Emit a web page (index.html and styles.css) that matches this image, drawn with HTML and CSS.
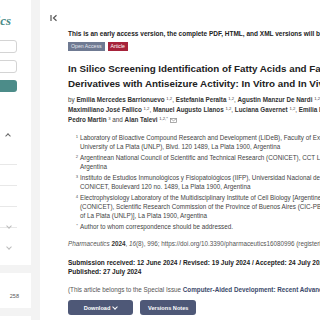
FILE: index.html
```html
<!DOCTYPE html>
<html lang="en">
<head>
    <meta charset="UTF-8">
    <title>Pharmaceutics</title>
    <link rel="stylesheet" href="styles.css">
</head>
<body>
<div class="sidebar">
    <div class="side-card">
        <div class="logo">Pharmaceutics</div>
        <div class="field"></div>
        <div class="field"></div>
        <div class="go"></div>
        <div class="toggle"><span class="chev up"></span></div>
        <div class="menu">
            <div class="menu-row"></div>
            <div class="menu-row"></div>
            <div class="menu-row"><span class="chev down"></span></div>
            <div class="menu-row last"><span class="chev down"></span></div>
        </div>
    </div>
    <div class="side-card small">
        <span class="count">258</span>
    </div>
    <div class="side-card small"></div>
</div>
<div class="main">
    <div class="toolbar">
        <svg width="8" height="8" viewBox="0 0 8 8"><path d="M1 1v6M6.5 1.3L3.5 4l3 2.7" fill="none" stroke="#555" stroke-width="1.2"/></svg>
    </div>
    <div class="content">
        <p class="notice">This is an early access version, the complete PDF, HTML, and XML versions will be available soon.</p>
        <div class="badges">
            <span class="badge oa">Open Access</span>
            <span class="badge art">Article</span>
        </div>
        <h1 class="title">In Silico Screening Identification of Fatty Acids and Fatty Acid<br>Derivatives with Antiseizure Activity: In Vitro and In Vivo Validation</h1>
        <p class="authors">by <b>Emilia Mercedes Barrionuevo</b> <sup>1,2</sup>, <b>Estefania Peralta</b> <sup>1,2</sup>, <b>Agustin Manzur De Nardi</b> <sup>1,2</sup>,<br>
            <b>Maximiliano José Fallico</b> <sup>1,2</sup>, <b>Manuel Augusto Llanos</b> <sup>1,2</sup>, <b>Luciana Gavernet</b> <sup>1,2</sup>, <b>Emilia Lisa</b> <sup>4</sup>,<br>
            <b>Pedro Martin</b> <sup>3</sup> and <b>Alan Talevi</b> <sup>1,2,*</sup> <svg class="mail" width="7" height="5" viewBox="0 0 7 5"><rect x="0.5" y="0.5" width="6" height="4" fill="none" stroke="#888" stroke-width="0.7"/><path d="M0.5 0.5L3.5 2.8 6.5 0.5" fill="none" stroke="#888" stroke-width="0.7"/></svg></p>
        <ul class="affil">
            <li><sup>1</sup><span>Laboratory of Bioactive Compound Research and Development (LIDeB), Faculty of Exact Sciences, National<br>University of La Plata (UNLP), Blvd. 120 1489, La Plata 1900, Argentina</span></li>
            <li><sup>2</sup><span>Argentinean National Council of Scientific and Technical Research (CONICET), CCT La Plata, La Plata 1900,<br>Argentina</span></li>
            <li><sup>3</sup><span>Instituto de Estudios Inmunológicos y Fisiopatológicos (IIFP), Universidad Nacional de La Plata (UNLP),<br>CONICET, Boulevard 120 no. 1489, La Plata 1900, Argentina</span></li>
            <li><sup>4</sup><span>Electrophysiology Laboratory of the Multidisciplinary Institute of Cell Biology [Argentine Research Council<br>(CONICET), Scientific Research Commission of the Province of Buenos Aires (CIC-PBA), National University<br>of La Plata (UNLP)], La Plata 1900, Argentina</span></li>
            <li><sup>*</sup><span>Author to whom correspondence should be addressed.</span></li>
        </ul>
        <p class="cite"><i>Pharmaceutics</i> <b>2024</b>, <i>16</i>(8), 996; https://doi.org/10.3390/pharmaceutics16080996 (registering DOI)</p>
        <p class="dates"><b>Submission received: 12 June 2024 / Revised: 19 July 2024 / Accepted: 24 July 2024 /<br>Published: 27 July 2024</b></p>
        <p class="issue">(This article belongs to the Special Issue <a href="#">Computer-Aided Development: Recent Advances in Drug Discovery</a>)</p>
        <div class="actions">
            <span class="btn">Download <span class="chev down light"></span></span>
            <span class="btn">Versions Notes</span>
        </div>
    </div>
</div>
</body>
</html>
```
FILE: styles.css
```css
*{
    margin: 0;
    padding: 0;
    box-sizing: border-box;
}
body{
    background: #f3f3f3;
    font-family: "Liberation Sans", Arial, sans-serif;
    color: #222;
    display: flex;
    width: 320px;
    height: 320px;
    overflow: hidden;
}
.sidebar{
    width: 31px;
    flex: none;
    overflow: hidden;
}
.side-card{
    width: 150px;
    margin-left: -119px;
    background: #fff;
    padding: 13px 14px 0 14px;
    height: 265px;
}
.side-card.small{
    height: 35px;
    margin-top: 8px;
    padding: 10px 12px 0 0;
    display: flex;
    align-items: center;
    justify-content: flex-end;
}
.count{
    font-size: 5.5px;
    color: #555;
}
.logo{
    font-family: "Liberation Serif", serif;
    font-style: italic;
    font-weight: bold;
    font-size: 13px;
    color: #4c8c89;
    text-align: right;
    padding-right: 6px;
    height: 27px;
}
.field{
    height: 13px;
    border: 1px solid #d4d4d4;
    border-radius: 3px;
    margin-bottom: 7px;
}
.go{
    height: 12px;
    background: #4c8c89;
    border-radius: 3px;
}
.toggle{
    height: 16px;
    margin-top: 32px;
    text-align: right;
    padding-right: 7px;
}
.menu{
    margin-top: 24px;
}
.menu-row{
    height: 21px;
    border-top: 1px solid #e8e8e8;
    text-align: right;
    padding-right: 6px;
    padding-top: 7px;
}
.chev{
    display: inline-block;
    width: 4px;
    height: 4px;
    border-right: 1px solid #999;
    border-bottom: 1px solid #999;
}
.chev.up{
    transform: rotate(-135deg);
    border-color: #666;
}
.chev.down{
    transform: rotate(45deg);
    border-color: #bbb;
}
.chev.light{
    border-color: #fff;
    margin-left: 3px;
    margin-bottom: 1px;
}
.main{
    flex: 1;
    background: #fff;
    margin-left: 9px;
    overflow: hidden;
}
.toolbar{
    height: 24px;
    padding: 8px 0 0 10px;
}
.content{
    padding-left: 28px;
    width: 420px;
    white-space: nowrap;
    font-size: 6.3px;
}
.notice{
    font-weight: bold;
    font-size: 6.5px;
    margin-top: 6px;
    height: 12px;
}
.badges{
    height: 14px;
    display: flex;
    gap: 3px;
}
.badge{
    height: 9px;
    line-height: 9px;
    padding: 0 3px;
    color: #fff;
    font-size: 5.2px;
}
.badge.oa{
    background: #6f7a92;
    color: #e4e6ee;
}
.badge.art{
    background: #a6223a;
}
.title{
    font-size: 9.8px;
    line-height: 15px;
    margin-top: 5px;
    color: #222;
}
.authors{
    line-height: 10px;
    margin-top: 4px;
    color: #444;
}
.authors b{
    color: #333;
}
sup{
    font-size: 4.2px;
    vertical-align: 2px;
    line-height: 0;
}
.mail{
    vertical-align: -1px;
}
.affil{
    list-style: none;
    margin-top: 8px;
    color: #444;
}
.affil li{
    display: flex;
    line-height: 9px;
    margin-bottom: 2px;
}
.affil sup{
    width: 12px;
    text-align: right;
    padding-right: 2px;
    vertical-align: 0;
    line-height: 7px;
    flex: none;
    color: #555;
}
.cite{
    margin-top: 9px;
    color: #555;
}
.cite b{
    color: #333;
}
.dates{
    margin-top: 11px;
    line-height: 9px;
    font-size: 6.5px;
}
.issue{
    margin-top: 10px;
    color: #555;
}
.issue a{
    color: #3c4a6b;
    text-decoration: none;
    font-weight: bold;
}
.actions{
    margin-top: 7px;
    display: flex;
    gap: 7px;
}
.btn{
    display: inline-flex;
    align-items: center;
    justify-content: center;
    height: 15px;
    background: #4e5877;
    color: #fff;
    font-weight: bold;
    font-size: 5.6px;
    border-radius: 3px;
    padding: 0 8px;
}
.btn:first-child{
    width: 65px;
}
```
